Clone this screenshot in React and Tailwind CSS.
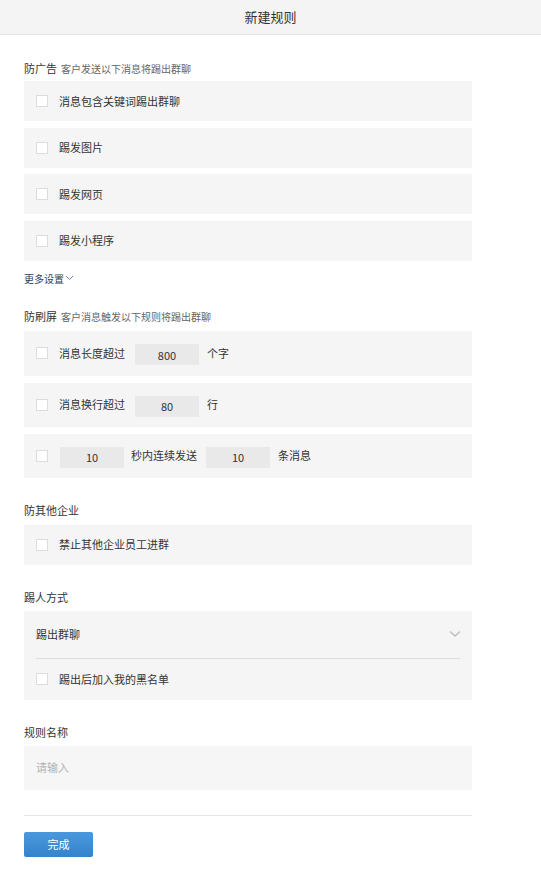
import React from 'react';

const font = { fontFamily: '"Noto Sans CJK SC", "Noto Sans", sans-serif' };

const Box = () => (
  <span className="inline-block w-[12px] h-[12px] border border-[#dcdcdc] bg-white shrink-0" />
);

const Num = ({ value }) => (
  <span className="inline-flex items-center justify-center w-[64px] h-[21px] bg-[#e9e9e9] text-[11px] text-[#333]">
    {value}
  </span>
);

const CheckRow = ({ label, h = 'h-[40px]' }) => (
  <div className={`flex items-center ${h} bg-[#f5f5f5] pl-[12px]`}>
    <Box />
    <span className="ml-[11px] text-[11px] text-[#333]">{label}</span>
  </div>
);

const Title = ({ main, sub }) => (
  <div className="flex items-baseline h-[14px]">
    <span className="text-[11px] text-[#333]">{main}</span>
    {sub && <span className="ml-[4px] text-[10px] text-[#666]">{sub}</span>}
  </div>
);

export default function App() {
  return (
    <div className="w-[541px] min-h-[876px] bg-white" style={font}>
      <div className="h-[35px] bg-[#f4f4f4] border-b border-[#e2e2e2] flex items-center justify-center">
        <span className="text-[13px] text-[#333]">新建规则</span>
      </div>

      <div className="w-[448px] ml-[24px]">
        {/* 防广告 */}
        <div className="mt-[25px]">
          <Title main="防广告" sub="客户发送以下消息将踢出群聊" />
        </div>
        <div className="mt-[7px] flex flex-col gap-[6.5px]">
          <CheckRow label="消息包含关键词踢出群聊" />
          <CheckRow label="踢发图片" />
          <CheckRow label="踢发网页" />
          <CheckRow label="踢发小程序" />
        </div>
        <div className="mt-[10px] flex items-center text-[10px] text-[#2a3f5c]">
          更多设置
          <svg width="9" height="6" viewBox="0 0 9 6" className="ml-[1px]">
            <path d="M1 1l3.5 3.5L8 1" fill="none" stroke="#5f86b5" strokeWidth="1" />
          </svg>
        </div>

        {/* 防刷屏 */}
        <div className="mt-[22px]">
          <Title main="防刷屏" sub="客户消息触发以下规则将踢出群聊" />
        </div>
        <div className="mt-[9px] flex flex-col gap-[7px]">
          <div className="flex items-center h-[45px] bg-[#f5f5f5] pl-[12px]">
            <Box />
            <span className="ml-[11px] text-[11px] text-[#333]">消息长度超过</span>
            <span className="ml-[10px]"><Num value="800" /></span>
            <span className="ml-[8px] text-[11px] text-[#333]">个字</span>
          </div>
          <div className="flex items-center h-[44px] bg-[#f5f5f5] pl-[12px]">
            <Box />
            <span className="ml-[11px] text-[11px] text-[#333]">消息换行超过</span>
            <span className="ml-[10px]"><Num value="80" /></span>
            <span className="ml-[8px] text-[11px] text-[#333]">行</span>
          </div>
          <div className="flex items-center h-[44px] bg-[#f5f5f5] pl-[12px]">
            <Box />
            <span className="ml-[12px]"><Num value="10" /></span>
            <span className="ml-[7px] text-[11px] text-[#333]">秒内连续发送</span>
            <span className="ml-[9px]"><Num value="10" /></span>
            <span className="ml-[8px] text-[11px] text-[#333]">条消息</span>
          </div>
        </div>

        {/* 防其他企业 */}
        <div className="mt-[24px]">
          <Title main="防其他企业" />
        </div>
        <div className="mt-[9px]">
          <CheckRow label="禁止其他企业员工进群" />
        </div>

        {/* 踢人方式 */}
        <div className="mt-[24px]">
          <Title main="踢人方式" />
        </div>
        <div className="mt-[8px] bg-[#f5f5f5] px-[12px]">
          <div className="h-[48px] flex items-center justify-between border-b border-[#dcdcdc]">
            <span className="text-[11px] text-[#333]">踢出群聊</span>
            <svg width="12" height="8" viewBox="0 0 12 8" className="-mr-[1px]">
              <path d="M1 1.5l5 4.5 5-4.5" fill="none" stroke="#bdbdbd" strokeWidth="1.5" />
            </svg>
          </div>
          <div className="h-[41px] flex items-center">
            <Box />
            <span className="ml-[11px] text-[11px] text-[#333]">踢出后加入我的黑名单</span>
          </div>
        </div>

        {/* 规则名称 */}
        <div className="mt-[24px]">
          <Title main="规则名称" />
        </div>
        <div className="mt-[8px] h-[44px] bg-[#f6f6f6] flex items-center pl-[12px]">
          <span className="text-[11px] text-[#b3b3b3]">请输入</span>
        </div>

        <div className="mt-[25px] border-t border-[#e5e5e5]" />

        <button className="mt-[16px] w-[69px] h-[25px] rounded-[2px] bg-gradient-to-b from-[#4a98dc] to-[#3484cc] text-white text-[11px] flex items-center justify-center">
          完成
        </button>
      </div>
    </div>
  );
}
